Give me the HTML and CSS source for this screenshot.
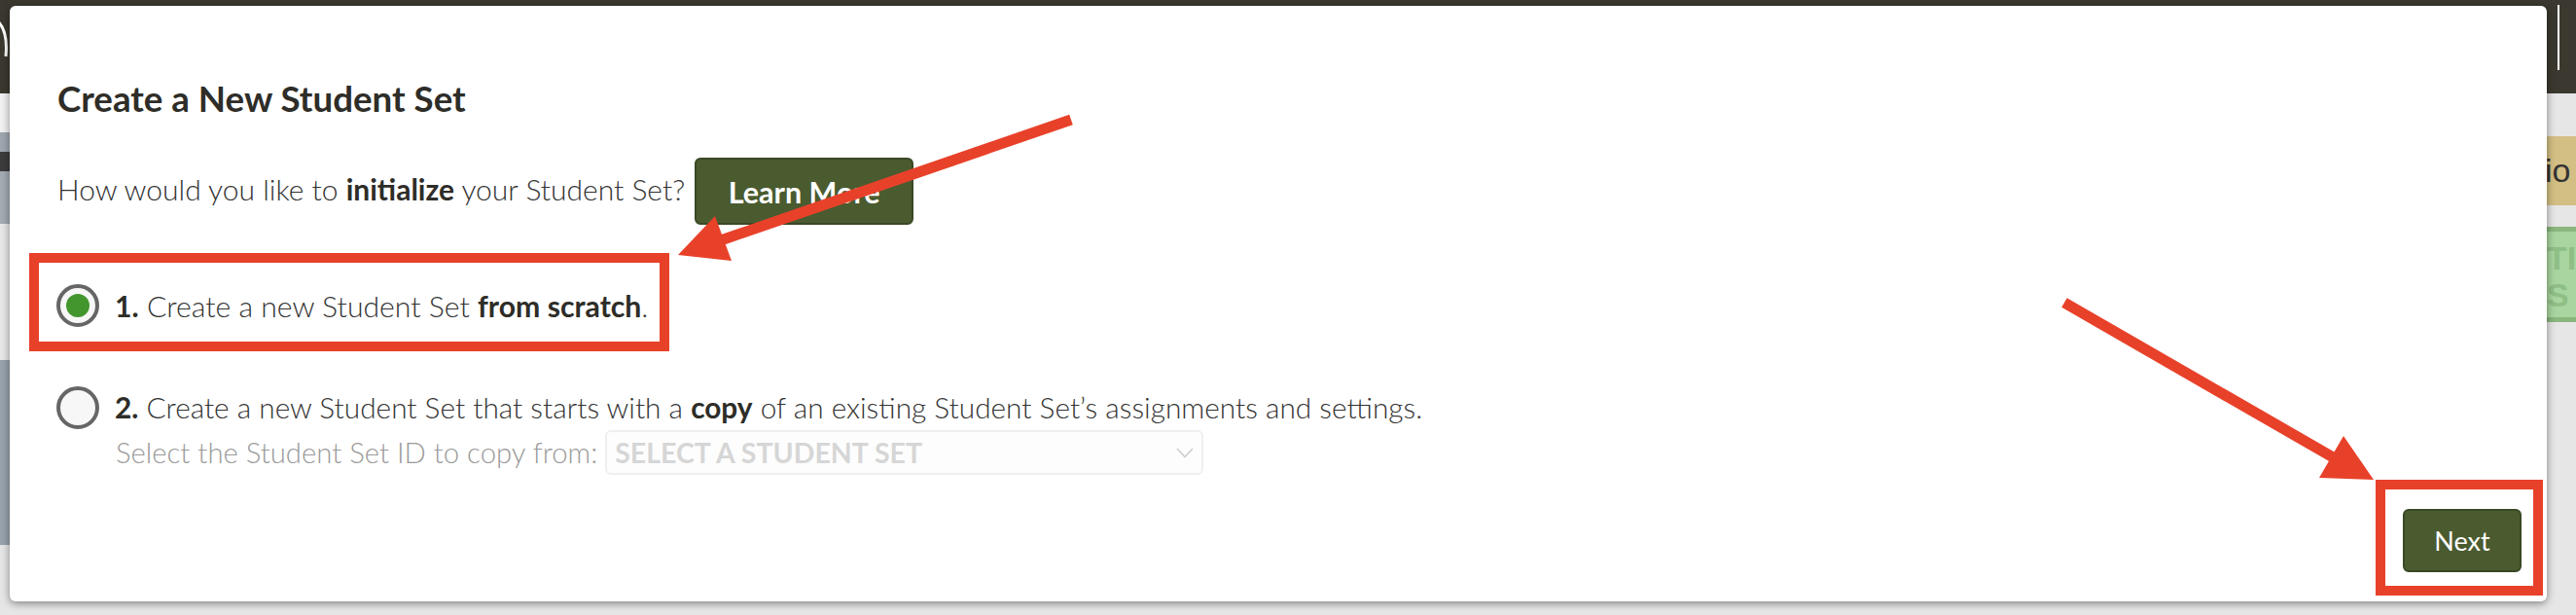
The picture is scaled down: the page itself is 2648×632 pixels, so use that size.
FILE: index.html
```html
<!DOCTYPE html>
<html lang="en">
<head>
<meta charset="utf-8">
<title>Create a New Student Set</title>
<link rel="stylesheet" href="styles.css">
</head>
<body>
<div class="page">
  <header class="topbar">
    <svg class="logo-arc" width="10" height="60" viewBox="0 0 10 60"><path d="M-8 18 Q9 26 6 58" fill="none" stroke="#fff" stroke-width="3"/></svg>
    <span class="bar-line"></span>
  </header>
  <div class="page-body">
    <div class="left-strip">
      <div class="ls ls1"></div><div class="ls ls2"></div><div class="ls ls3"></div><div class="ls ls4"></div><div class="ls ls5"></div><div class="ls ls6"></div>
    </div>
    <div class="right-strip">
      <div class="rs rs-grey1"></div>
      <div class="rs rs-tan">io</div>
      <div class="rs rs-grey2"></div>
      <div class="rs rs-green">TI<br>S</div>
    </div>
  </div>

  <div class="modal">
    <h1 class="title">Create a New Student Set</h1>
    <div class="intro">
      <span class="intro-text">How would you like to <b>initialize</b> your Student Set?</span>
      <button class="btn btn-learn">Learn More</button>
    </div>
    <div class="option opt-first">
      <span class="radio checked"></span>
      <span class="opt-text"><b>1.</b> Create a new Student Set <b>from scratch</b>.</span>
    </div>
    <div class="option opt-second">
      <span class="radio"></span>
      <span class="opt-text"><b>2.</b> Create a new Student Set that starts with a <b>copy</b> of an existing Student Set’s assignments and settings.</span>
    </div>
    <div class="copy-from">
      <span class="copy-label">Select the Student Set ID to copy from:</span>
      <div class="select">
        <span class="select-text">SELECT A STUDENT SET</span>
        <svg class="chevron" width="18" height="11" viewBox="0 0 18 11"><path d="M1 1 L9 9.5 L17 1" fill="none" stroke="#cfcfcf" stroke-width="1.6"/></svg>
      </div>
    </div>
    <div class="footer">
      <button class="btn btn-next">Next</button>
    </div>
  </div>

  <svg class="annot" width="2648" height="632" viewBox="0 0 2648 632">
    <g fill="none" stroke="#e8412a" stroke-width="10">
      <rect x="35" y="265" width="648" height="91"/>
      <rect x="2447" y="498" width="162" height="109"/>
    </g>
    <g stroke="#e8412a" stroke-width="11" stroke-linecap="butt">
      <line x1="1101" y1="123" x2="738" y2="248"/>
      <line x1="2122" y1="311" x2="2400" y2="471"/>
    </g>
    <g fill="#e8412a">
      <polygon points="697,262 735,222 752,268"/>
      <polygon points="2440,493 2409,448 2384,491"/>
    </g>
  </svg>
</div>
</body>
</html>
```
FILE: styles.css
```css
* { box-sizing: border-box; }
html, body { margin: 0; padding: 0; }
body {
  width: 2648px;
  height: 632px;
  overflow: hidden;
  background: #e6e6e6;
  font-family: "Lato", "Noto Sans", sans-serif;
  color: #333;
}
.page { position: relative; width: 2648px; height: 632px; }

.topbar {
  height: 96px;
  background: #3b382f;
  display: flex;
  justify-content: space-between;
  align-items: flex-start;
}
.logo-arc { display: block; }
.bar-line { width: 2px; height: 67px; margin: 5px 17px 0 0; background: #fff; }

.page-body { display: flex; justify-content: space-between; height: 536px; }
.left-strip { width: 10px; display: flex; flex-direction: column; }
.ls1 { height: 40px; background: #f2f2f2; }
.ls2 { height: 20px; background: #9ea7b0; }
.ls3 { height: 20px; background: #3c3c3c; }
.ls4 { height: 54px; background: #a3abb3; }
.ls5 { height: 140px; background: #e8e8e8; }
.ls6 { height: 190px; background: #98a2ac; }

.right-strip { width: 30px; display: flex; flex-direction: column; overflow: hidden; }
.rs-grey1 { height: 44px; background: #e6e6e6; }
.rs-tan {
  height: 71px; background: #d3bf84; color: #333;
  font-family: "Liberation Sans", sans-serif; font-size: 34px; line-height: 71px;
  text-indent: -2px; white-space: nowrap; overflow: hidden;
}
.rs-grey2 { height: 22px; background: #e6e6e6; }
.rs-green {
  height: 98px; background: #a8d5a0; border-top: 5px solid #8ab77e; border-bottom: 5px solid #8ab77e;
  color: #8fbf86; font-family: "Liberation Sans", sans-serif; font-weight: 700; font-size: 34px; line-height: 38px;
  padding-top: 8px; white-space: nowrap; overflow: hidden;
}

.modal {
  position: absolute;
  left: 10px; top: 6px;
  width: 2608px; height: 612px;
  background: #fff;
  border-radius: 6px;
  box-shadow: 0 2px 8px rgba(0,0,0,0.45);
  padding: 75px 26px 30px 48px;
  display: flex;
  flex-direction: column;
}
.title {
  margin: 0;
  font-size: 36.7px;
  line-height: 40px;
  font-weight: 700;
  color: #2e2d28;
  padding-left: 1px;
}
.intro {
  margin-top: 41px;
  height: 69px;
  display: flex;
  align-items: center;
}
.intro-text {
  font-size: 30px;
  line-height: 40px;
  font-weight: 300;
  padding-left: 1px;
  padding-bottom: 6px;
}
.intro-text b, .opt-text b { font-weight: 700; color: #2e2d28; }

.btn {
  font-family: inherit;
  background: #4a5b30;
  border: 2px solid #3a4825;
  border-radius: 6px;
  color: #fff;
  padding: 0;
  display: flex;
  align-items: center;
  justify-content: center;
}
.btn-learn {
  margin-left: 10px;
  width: 225px;
  height: 69px;
  font-size: 30.5px;
  font-weight: 700;
}
.option {
  height: 44px;
  display: flex;
  align-items: center;
  gap: 16px;
}
.opt-first { margin-top: 61px; }
.opt-second { margin-top: 61px; }
.radio {
  width: 44px; height: 44px;
  border: 4px solid #666;
  border-radius: 50%;
  background: #f7f7f7;
  display: flex;
  align-items: center;
  justify-content: center;
  flex: none;
}
.radio.checked::after {
  content: "";
  width: 24px; height: 24px;
  border-radius: 50%;
  background: #43962e;
}
.opt-text {
  font-size: 30.2px;
  line-height: 40px;
  font-weight: 300;
  color: #333;
}
.opt-second .opt-text { font-size: 29.8px; }
.copy-from {
  margin-top: 1px;
  margin-left: 61px;
  height: 46px;
  display: flex;
  align-items: center;
  gap: 8px;
}
.copy-label {
  font-size: 29.3px;
  line-height: 40px;
  font-weight: 300;
  color: #9a9a9a;
}
.select {
  width: 615px;
  height: 46px;
  border: 2px solid #efefef;
  border-radius: 6px;
  background: #fdfdfd;
  display: flex;
  align-items: center;
  justify-content: space-between;
  padding: 0 8px;
}
.select-text {
  font-size: 28.5px;
  font-weight: 700;
  color: #d6d6d6;
  line-height: 40px;
}
.chevron { display: block; }
.footer {
  margin-top: auto;
  display: flex;
  justify-content: flex-end;
}
.btn-next {
  width: 122px;
  height: 65px;
  font-size: 27px;
  font-weight: 400;
}
.annot { position: absolute; left: 0; top: 0; pointer-events: none; }
```
